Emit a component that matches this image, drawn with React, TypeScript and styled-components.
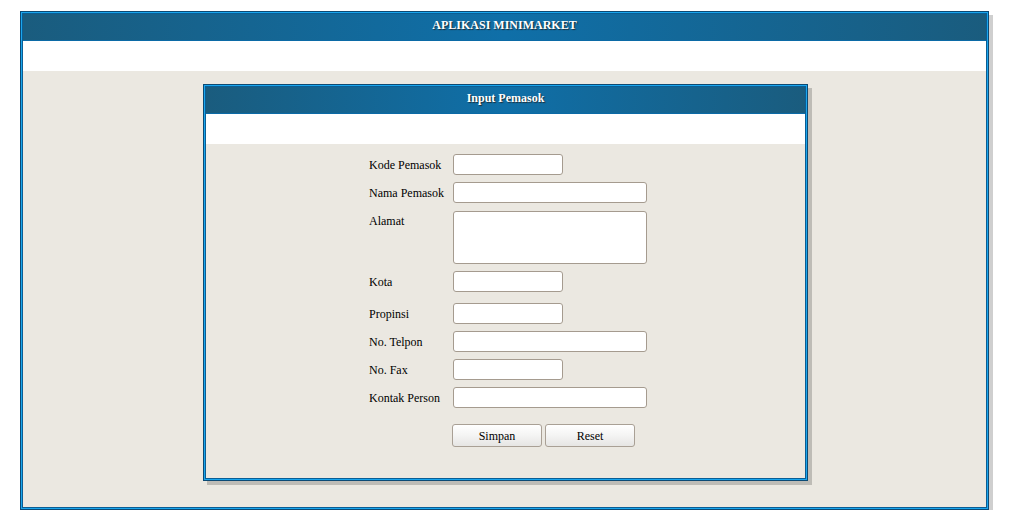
import React from 'react';
import styled, { createGlobalStyle } from 'styled-components';

const GlobalStyle = createGlobalStyle`
  body {
    margin: 0;
    background: #ffffff;
    font-family: "Liberation Serif", "Times New Roman", serif;
    font-size: 12px;
    color: #000;
  }
`;

const Page = styled.div`
  padding: 11px 0 0 20px;
`;

// three line border: dark / bright blue / dark
const Frame = styled.div<{ $width: number }>`
  width: ${(p) => p.$width}px;
  box-sizing: border-box;
  border: 1px solid #0c4a74;
  box-shadow: 4px 4px 0 rgba(0, 0, 0, 0.19);
`;

const FrameMid = styled.div`
  border: 1px solid #1aa6ee;
`;

const FrameInner = styled.div<{ $height: number }>`
  border: 1px solid #0a5e95;
  height: ${(p) => p.$height}px;
  background: #ebe8e1;
  display: flex;
  flex-direction: column;
`;

const Header = styled.div`
  height: 26px;
  border-bottom: 1px solid #0b6aa6;
  background: linear-gradient(to right, #1a5c7e 0%, #0f6fa8 50%, #1a5c7e 100%);
  color: #ffffff;
  font-weight: bold;
  font-size: 12px;
  line-height: 23px;
  text-align: center;
  text-shadow: 1px 1px 1px #1c2f3c;
`;

const WhiteBand = styled.div`
  height: 30px;
  background: #ffffff;
`;

const Content = styled.div`
  flex: 1;
  padding: 13px 0 0 180px;
`;

const Form = styled.div`
  padding: 10px 0 0 163px;
  display: flex;
  flex-direction: column;
`;

const Row = styled.div<{ $space: number; $top?: boolean }>`
  display: flex;
  align-items: ${(p) => (p.$top ? 'flex-start' : 'center')};
  margin-top: ${(p) => p.$space}px;
`;

const Label = styled.label<{ $top?: boolean }>`
  width: 84px;
  flex: none;
  font-size: 12px;
  line-height: 14px;
  padding-top: ${(p) => (p.$top ? 3 : 1)}px;
`;

const Input = styled.input<{ $wide?: boolean }>`
  width: ${(p) => (p.$wide ? 194 : 110)}px;
  height: 21px;
  box-sizing: border-box;
  border: 1px solid #a59b8f;
  border-radius: 3px;
  background: #fff;
  padding: 1px 3px;
  font-family: inherit;
  font-size: 12px;
  outline: none;
`;

const TextArea = styled.textarea`
  width: 194px;
  height: 53px;
  box-sizing: border-box;
  border: 1px solid #a59b8f;
  border-radius: 3px;
  background: #fff;
  padding: 2px 3px;
  font-family: inherit;
  font-size: 12px;
  resize: none;
  outline: none;
  display: block;
`;

const Buttons = styled.div`
  display: flex;
  gap: 3px;
  margin: 16px 0 0 83px;
`;

const Button = styled.button`
  width: 90px;
  height: 23px;
  box-sizing: border-box;
  border: 1px solid #a9a095;
  border-radius: 3px;
  background: linear-gradient(to bottom, #ffffff 0%, #f4f4f3 50%, #e6e5e3 100%);
  font-family: "Liberation Serif", "Times New Roman", serif;
  font-size: 12px;
  color: #000;
  padding: 2px 0 0;
  cursor: pointer;
`;

const fields = [
  { label: 'Kode Pemasok', wide: false, space: 0 },
  { label: 'Nama Pemasok', wide: true, space: 7 },
  { label: 'Alamat', area: true, space: 8 },
  { label: 'Kota', wide: false, space: 7 },
  { label: 'Propinsi', wide: false, space: 11 },
  { label: 'No. Telpon', wide: true, space: 7 },
  { label: 'No. Fax', wide: false, space: 7 },
  { label: 'Kontak Person', wide: true, space: 7 },
];

const App: React.FC = () => {
  return (
    <>
      <GlobalStyle />
      <Page>
        <Frame $width={969}>
          <FrameMid>
            <FrameInner $height={493}>
              <Header>APLIKASI MINIMARKET</Header>
              <WhiteBand />
              <Content>
                <Frame $width={605}>
                  <FrameMid>
                    <FrameInner $height={391}>
                      <Header>Input Pemasok</Header>
                      <WhiteBand />
                      <Form>
                        {fields.map((f) => (
                          <Row key={f.label} $space={f.space} $top={f.area}>
                            <Label $top={f.area}>{f.label}</Label>
                            {f.area ? <TextArea /> : <Input type="text" $wide={f.wide} />}
                          </Row>
                        ))}
                        <Buttons>
                          <Button type="button">Simpan</Button>
                          <Button type="reset">Reset</Button>
                        </Buttons>
                      </Form>
                    </FrameInner>
                  </FrameMid>
                </Frame>
              </Content>
            </FrameInner>
          </FrameMid>
        </Frame>
      </Page>
    </>
  );
};

export default App;
